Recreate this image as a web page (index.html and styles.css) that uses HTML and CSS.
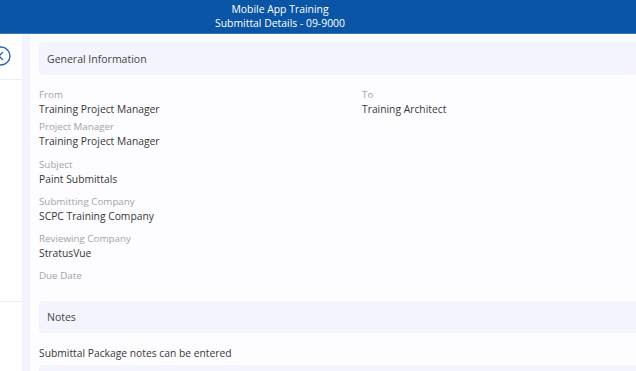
FILE: index.html
```html
<!DOCTYPE html>
<html lang="en">
<head>
    <meta charset="UTF-8">
    <meta name="viewport" content="width=device-width, initial-scale=1.0">
    <title>Submittal Details</title>
    <link rel="stylesheet" href="styles.css">
</head>
<body>
    <div class="header">
        <div>Mobile App Training</div>
        <div>Submittal Details - 09-9000</div>
    </div>
    <div class="main">
        <div class="sidebar">
            <div class="back-row">
                <svg class="back-icon" width="22" height="22" viewBox="0 0 22 22">
                    <circle cx="11" cy="11" r="9" fill="none" stroke="#2c62ab" stroke-width="1.4"/>
                    <path d="M12.5 7.5 L9 11 L12.5 14.5" fill="none" stroke="#2c62ab" stroke-width="1.4" stroke-linecap="round"/>
                </svg>
            </div>
            <div class="side-list"></div>
        </div>
        <div class="strip"></div>
        <div class="content">
            <div class="section-head">General Information</div>
            <div class="info-grid">
                <div class="field">
                    <div class="label">From</div>
                    <div class="value">Training Project Manager</div>
                </div>
                <div class="field">
                    <div class="label">To</div>
                    <div class="value">Training Architect</div>
                </div>
            </div>
            <div class="field pm">
                <div class="label">Project Manager</div>
                <div class="value">Training Project Manager</div>
            </div>
            <div class="field spaced subject">
                <div class="label">Subject</div>
                <div class="value">Paint Submittals</div>
            </div>
            <div class="field spaced">
                <div class="label">Submitting Company</div>
                <div class="value">SCPC Training Company</div>
            </div>
            <div class="field spaced">
                <div class="label">Reviewing Company</div>
                <div class="value">StratusVue</div>
            </div>
            <div class="field spaced">
                <div class="label">Due Date</div>
                <div class="value"></div>
            </div>
            <div class="section-head notes-head">Notes</div>
            <div class="notes-text">Submittal Package notes can be entered</div>
            <div class="notes-box"></div>
        </div>
    </div>
</body>
</html>
```

FILE: styles.css
```css
body {
    margin: 0;
    padding: 0;
    font-family: "Open Sans", Arial, sans-serif;
    color: #3a3a3a;
    background-color: #fdfcff;
    height: 371px;
    overflow: hidden;
}
.header {
    height: 34px;
    background-color: #0a55a5;
    border-bottom: 1px solid #3b78bd;
    color: #fff;
    font-size: 10.4px;
    line-height: 14.2px;
    text-align: center;
    padding: 2px 76px 0 0;
    box-sizing: border-box;
}
.main {
    display: flex;
    height: 337px;
    overflow: hidden;
}
.sidebar {
    width: 22px;
    background-color: #fff;
    overflow: hidden;
}
.back-row {
    height: 45px;
    border-bottom: 1px solid #eceef6;
    display: flex;
    align-items: center;
}
.back-icon {
    margin-left: -10px;
    margin-top: -2px;
}
.side-list {
    height: 221px;
    border-bottom: 1px solid #eceef6;
}
.strip {
    width: 8px;
    background-color: #f3f3fc;
}
.content {
    flex: 1;
    padding: 8px 0 0 9px;
    background-color: #fdfcff;
}
.section-head {
    background-color: #f3f4fd;
    border-radius: 4px 0 0 4px;
    height: 33px;
    display: flex;
    align-items: center;
    padding-left: 8px;
    font-size: 10.5px;
    color: #444;
}
.info-grid {
    display: grid;
    grid-template-columns: 323px 1fr;
    margin-top: 13px;
}
.field {
    font-size: 10.3px;
    line-height: 14px;
}
.field.pm {
    margin-top: 4px;
}
.field.spaced {
    margin-top: 9px;
}
.field.subject {
    margin-top: 10px;
}
.label {
    color: #a3a3a9;
    font-size: 9.8px;
}
.value {
    color: #383838;
    min-height: 14px;
}
.notes-head {
    margin-top: 4px;
    height: 32px;
}
.notes-text {
    font-size: 10.3px;
    color: #383838;
    margin-top: 13px;
}
.notes-box {
    margin-top: 5px;
    height: 40px;
    background-color: #f3f4fd;
    border-radius: 4px 0 0 0;
}
```
